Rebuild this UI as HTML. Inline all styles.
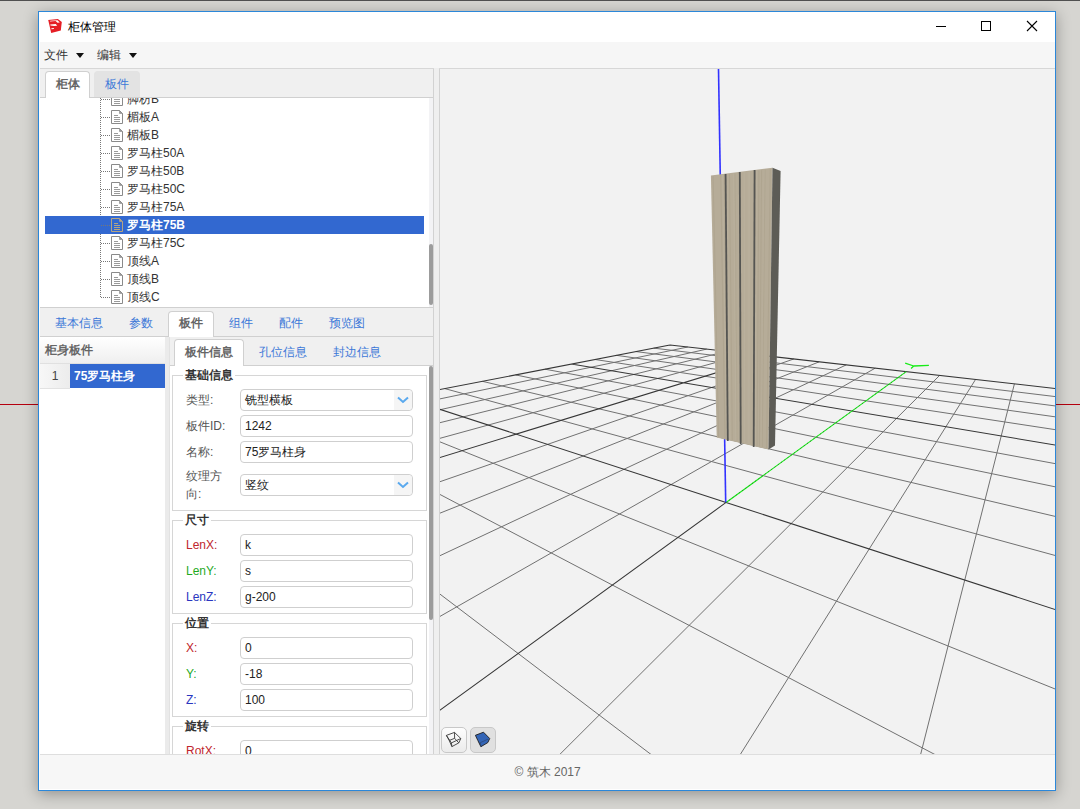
<!DOCTYPE html>
<html><head><meta charset="utf-8"><style>
*{box-sizing:border-box;margin:0;padding:0}
html,body{width:1080px;height:809px;overflow:hidden;background:#d6d5d1;font-family:"Liberation Sans",sans-serif;font-size:12px;color:#333}
.a{position:absolute}
#topline{position:absolute;left:0;top:0;width:1080px;height:1px;background:#505050}
#redl{position:absolute;left:0;top:404px;width:1080px;height:1px;background:#b5000f}
#win{position:absolute;left:38px;top:11px;width:1018px;height:780px;border:1px solid #2b87d9;background:#fff;box-shadow:0 3px 14px rgba(0,0,0,0.32)}
#title{position:absolute;left:68px;top:19px;font-size:12px;color:#000;line-height:16px}
#menubar{position:absolute;left:40px;top:42px;width:1015px;height:27px;background:#f6f6f6;border-bottom:1px solid #d7d7d7}
.menu{position:absolute;top:47px;line-height:16px;color:#333}
.caret{position:absolute;top:53px;width:0;height:0;border-left:4px solid transparent;border-right:4px solid transparent;border-top:5px solid #111}
#content{position:absolute;left:40px;top:69px;width:1015px;height:685px;background:#efefef}
#lp{position:absolute;left:40px;top:69px;width:394px;height:685px;background:#f0f0f0;border-right:1px solid #d2d2d2}
.tab{position:absolute;height:26px;border:1px solid #d0d0d0;border-bottom:none;border-radius:4px 4px 0 0;text-align:center;line-height:24px;color:#3c78d8}
.tab.act{background:#fff;color:#666;font-weight:bold}
.tab.in{background:#e3e3e3;border-color:#e3e3e3}
.hline{position:absolute;height:1px;background:#d0d0d0}
#tree{position:absolute;left:40px;top:98px;width:389px;height:209px;background:#fff;overflow:hidden}
#treewrap{position:absolute;left:40px;top:98px;width:393px;height:209px;overflow:hidden}
.vdot{position:absolute;left:100px;width:1px;background-image:linear-gradient(#777 50%,transparent 50%);background-size:1px 2px}
.hdot{position:absolute;left:101px;width:9px;height:1px;background-image:linear-gradient(90deg,#777 50%,transparent 50%);background-size:2px 1px}
.di{position:absolute}
.ti{position:absolute;left:127px;line-height:18px;height:18px;color:#333;white-space:nowrap}
.tsel{color:#fff;font-weight:bold}
.sel{position:absolute;left:45px;width:379px;height:18px;background:#3268d0}
.sb{position:absolute;width:4px;background:#f3f3f5}
.thumb{position:absolute;width:4px;background:#9c9c9c;border-radius:2px}
.ptab{position:absolute;top:311px;line-height:24px;color:#3c78d8;white-space:nowrap}
#list{position:absolute;left:40px;top:337px;width:125px;height:417px;background:#fff}
#lhead{position:absolute;left:40px;top:337px;width:125px;height:27px;background:linear-gradient(#fff,#efefef);border-bottom:1px solid #e0e0e0;font-weight:bold;color:#666;line-height:26px;padding-left:5px}
#lnum{position:absolute;left:40px;top:364px;width:30px;height:25px;background:linear-gradient(90deg,#f7f7f7,#ececec);color:#444;line-height:25px;text-align:center;border-bottom:1px solid #e2e2e2}
#lsel{position:absolute;left:70px;top:364px;width:95px;height:24px;background:#3268d0;color:#fff;font-weight:bold;line-height:24px;padding-left:4px}
#split{position:absolute;left:165px;top:337px;width:5px;height:417px;background:#ebebeb;border-right:1px solid #e2e2e2}
#rp{position:absolute;left:170px;top:337px;width:263px;height:417px;background:#f0f0f0;overflow:hidden}
#pcontent{position:absolute;left:170px;top:366px;width:259px;height:388px;background:#fff;overflow:hidden}
.fs{position:absolute;left:172px;width:255px;border:1px solid #d6d6d6}
.lg{position:absolute;left:183px;background:#fff;font-weight:bold;color:#333;line-height:12px;padding-left:2px}
.lbl{position:absolute;left:186px;line-height:22px;color:#555;white-space:nowrap}
.inp{position:absolute;left:240px;width:173px;height:22px;border:1px solid #cfcfcf;border-radius:4px;background:#fff;line-height:20px;padding-left:4px;color:#222;overflow:hidden}
.arr{position:absolute;right:0;top:0;width:18px;height:20px;background:#f5f5f5;border-radius:0 4px 4px 0}
.arr svg{position:absolute;left:3px;top:6px}
#view{position:absolute;left:439px;top:69px;width:616px;height:685px;background:#f2f2f2;border-left:1px solid #d2d2d2;overflow:hidden}
#status{position:absolute;left:40px;top:754px;width:1015px;height:35px;background:#f7f7f7;border-top:1px solid #dedede}
#copy{position:absolute;left:514.5px;top:764px;color:#666;line-height:16px;font-size:12px}
.vbtn{position:absolute;top:727px;width:26px;height:26px;border:1px solid #c8c8c8;border-radius:5px}
</style></head><body>
<div id="topline"></div>
<div id="redl"></div>
<div id="win"></div>
<svg class="a" style="left:47px;top:18px" width="16" height="16" viewBox="0 0 16 16"><path d="M1.2 2.1L10.9 1.1L14.8 3.9L13.8 12.6L4.2 15.1Z" fill="#e51e25"/><path d="M3 3.4L8.6 3.0L10.5 4.8L12.8 4.5L11.3 3.1L10.5 2.3L3.2 2.7Z" fill="#fff"/><path d="M3.2 6.5L8.8 6.1L10.2 7.8L7.2 8.0L3.5 7.4Z" fill="#fff"/><path d="M4.3 10.2L6.9 9.9L6.9 10.9L4.5 11.2Z" fill="#fff"/></svg>
<div id="title">柜体管理</div>
<svg class="a" style="left:930px;top:15px" width="120" height="22" viewBox="930 15 120 22"><path d="M936 26.5H946" stroke="#000" stroke-width="1"/><rect x="981.5" y="21.5" width="9" height="9" fill="none" stroke="#000"/><path d="M1027 21L1037 31M1037 21L1027 31" stroke="#000" stroke-width="1.1"/></svg>
<div id="menubar"></div>
<div class="menu" style="left:44px">文件</div><div class="caret" style="left:76px"></div>
<div class="menu" style="left:97px">编辑</div><div class="caret" style="left:129px"></div>
<div id="content"></div>
<div id="lp"></div>
<div class="hline" style="left:40px;top:97px;width:393px"></div>
<div class="tab act" style="left:45px;top:71px;width:45px;height:27px">柜体</div>
<div class="tab in" style="left:94px;top:71px;width:46px">板件</div>
<div id="tree"><div style="position:absolute;left:-40px;top:-98px;width:1080px;height:809px">
<div class="vdot" style="top:98px;height:200px"></div>
<div class="hdot" style="top:99px"></div>
<svg class="di" style="left:111px;top:92px" width="12" height="14" viewBox="0 0 12 14"><path d="M0.5 0.5H8.5L11.5 3.5V13.5H0.5Z" fill="#fff" stroke="#8a8a8a"/><path d="M8.5 0.5V3.5H11.5Z" fill="#9a9a9a" stroke="#8a8a8a" stroke-width="0.6"/><path d="M3 5.5H7M3 7.5H9M3 9.5H9M3 11.5H9" stroke="#9a9a9a"/></svg>
<div class="ti" style="top:90px">脚枋B</div>
<div class="hdot" style="top:117px"></div>
<svg class="di" style="left:111px;top:110px" width="12" height="14" viewBox="0 0 12 14"><path d="M0.5 0.5H8.5L11.5 3.5V13.5H0.5Z" fill="#fff" stroke="#8a8a8a"/><path d="M8.5 0.5V3.5H11.5Z" fill="#9a9a9a" stroke="#8a8a8a" stroke-width="0.6"/><path d="M3 5.5H7M3 7.5H9M3 9.5H9M3 11.5H9" stroke="#9a9a9a"/></svg>
<div class="ti" style="top:108px">楣板A</div>
<div class="hdot" style="top:135px"></div>
<svg class="di" style="left:111px;top:128px" width="12" height="14" viewBox="0 0 12 14"><path d="M0.5 0.5H8.5L11.5 3.5V13.5H0.5Z" fill="#fff" stroke="#8a8a8a"/><path d="M8.5 0.5V3.5H11.5Z" fill="#9a9a9a" stroke="#8a8a8a" stroke-width="0.6"/><path d="M3 5.5H7M3 7.5H9M3 9.5H9M3 11.5H9" stroke="#9a9a9a"/></svg>
<div class="ti" style="top:126px">楣板B</div>
<div class="hdot" style="top:153px"></div>
<svg class="di" style="left:111px;top:146px" width="12" height="14" viewBox="0 0 12 14"><path d="M0.5 0.5H8.5L11.5 3.5V13.5H0.5Z" fill="#fff" stroke="#8a8a8a"/><path d="M8.5 0.5V3.5H11.5Z" fill="#9a9a9a" stroke="#8a8a8a" stroke-width="0.6"/><path d="M3 5.5H7M3 7.5H9M3 9.5H9M3 11.5H9" stroke="#9a9a9a"/></svg>
<div class="ti" style="top:144px">罗马柱50A</div>
<div class="hdot" style="top:171px"></div>
<svg class="di" style="left:111px;top:164px" width="12" height="14" viewBox="0 0 12 14"><path d="M0.5 0.5H8.5L11.5 3.5V13.5H0.5Z" fill="#fff" stroke="#8a8a8a"/><path d="M8.5 0.5V3.5H11.5Z" fill="#9a9a9a" stroke="#8a8a8a" stroke-width="0.6"/><path d="M3 5.5H7M3 7.5H9M3 9.5H9M3 11.5H9" stroke="#9a9a9a"/></svg>
<div class="ti" style="top:162px">罗马柱50B</div>
<div class="hdot" style="top:189px"></div>
<svg class="di" style="left:111px;top:182px" width="12" height="14" viewBox="0 0 12 14"><path d="M0.5 0.5H8.5L11.5 3.5V13.5H0.5Z" fill="#fff" stroke="#8a8a8a"/><path d="M8.5 0.5V3.5H11.5Z" fill="#9a9a9a" stroke="#8a8a8a" stroke-width="0.6"/><path d="M3 5.5H7M3 7.5H9M3 9.5H9M3 11.5H9" stroke="#9a9a9a"/></svg>
<div class="ti" style="top:180px">罗马柱50C</div>
<div class="hdot" style="top:207px"></div>
<svg class="di" style="left:111px;top:200px" width="12" height="14" viewBox="0 0 12 14"><path d="M0.5 0.5H8.5L11.5 3.5V13.5H0.5Z" fill="#fff" stroke="#8a8a8a"/><path d="M8.5 0.5V3.5H11.5Z" fill="#9a9a9a" stroke="#8a8a8a" stroke-width="0.6"/><path d="M3 5.5H7M3 7.5H9M3 9.5H9M3 11.5H9" stroke="#9a9a9a"/></svg>
<div class="ti" style="top:198px">罗马柱75A</div>
<div class="sel" style="top:216px"></div>
<div class="hdot" style="top:225px"></div>
<svg class="di" style="left:111px;top:218px" width="12" height="14" viewBox="0 0 12 14"><path d="M0.5 0.5H8.5L11.5 3.5V13.5H0.5Z" fill="none" stroke="#b5a583"/><path d="M8.5 0.5V3.5H11.5Z" fill="#b5a583" stroke="#b5a583" stroke-width="0.6"/><path d="M3 5.5H7M3 7.5H9M3 9.5H9M3 11.5H9" stroke="#b5a583"/></svg>
<div class="ti tsel" style="top:216px">罗马柱75B</div>
<div class="hdot" style="top:243px"></div>
<svg class="di" style="left:111px;top:236px" width="12" height="14" viewBox="0 0 12 14"><path d="M0.5 0.5H8.5L11.5 3.5V13.5H0.5Z" fill="#fff" stroke="#8a8a8a"/><path d="M8.5 0.5V3.5H11.5Z" fill="#9a9a9a" stroke="#8a8a8a" stroke-width="0.6"/><path d="M3 5.5H7M3 7.5H9M3 9.5H9M3 11.5H9" stroke="#9a9a9a"/></svg>
<div class="ti" style="top:234px">罗马柱75C</div>
<div class="hdot" style="top:261px"></div>
<svg class="di" style="left:111px;top:254px" width="12" height="14" viewBox="0 0 12 14"><path d="M0.5 0.5H8.5L11.5 3.5V13.5H0.5Z" fill="#fff" stroke="#8a8a8a"/><path d="M8.5 0.5V3.5H11.5Z" fill="#9a9a9a" stroke="#8a8a8a" stroke-width="0.6"/><path d="M3 5.5H7M3 7.5H9M3 9.5H9M3 11.5H9" stroke="#9a9a9a"/></svg>
<div class="ti" style="top:252px">顶线A</div>
<div class="hdot" style="top:279px"></div>
<svg class="di" style="left:111px;top:272px" width="12" height="14" viewBox="0 0 12 14"><path d="M0.5 0.5H8.5L11.5 3.5V13.5H0.5Z" fill="#fff" stroke="#8a8a8a"/><path d="M8.5 0.5V3.5H11.5Z" fill="#9a9a9a" stroke="#8a8a8a" stroke-width="0.6"/><path d="M3 5.5H7M3 7.5H9M3 9.5H9M3 11.5H9" stroke="#9a9a9a"/></svg>
<div class="ti" style="top:270px">顶线B</div>
<div class="hdot" style="top:297px"></div>
<svg class="di" style="left:111px;top:290px" width="12" height="14" viewBox="0 0 12 14"><path d="M0.5 0.5H8.5L11.5 3.5V13.5H0.5Z" fill="#fff" stroke="#8a8a8a"/><path d="M8.5 0.5V3.5H11.5Z" fill="#9a9a9a" stroke="#8a8a8a" stroke-width="0.6"/><path d="M3 5.5H7M3 7.5H9M3 9.5H9M3 11.5H9" stroke="#9a9a9a"/></svg>
<div class="ti" style="top:288px">顶线C</div>
</div></div>
<div class="sb" style="left:429px;top:98px;height:209px"></div>
<div class="thumb" style="left:429px;top:244px;height:61px"></div>
<div class="hline" style="left:40px;top:307px;width:393px"></div>
<div class="hline" style="left:40px;top:336px;width:393px"></div>
<div class="tab act" style="left:168px;top:311px;width:46px;height:26px;font-weight:bold;line-height:22px">板件</div>
<div class="ptab" style="left:55px">基本信息</div>
<div class="ptab" style="left:129px">参数</div>
<div class="ptab" style="left:229px">组件</div>
<div class="ptab" style="left:279px">配件</div>
<div class="ptab" style="left:329px">预览图</div>
<div id="list"></div>
<div id="lhead">柜身板件</div>
<div id="lnum">1</div>
<div id="lsel">75罗马柱身</div>
<div id="split"></div>
<div id="rp">
 <div class="hline" style="left:0;top:28px;width:263px"></div>
 <div class="tab act" style="left:4px;top:2px;width:70px;height:27px;font-weight:bold">板件信息</div>
 <div class="ptab" style="left:89px;top:2px;line-height:26px">孔位信息</div>
 <div class="ptab" style="left:163px;top:2px;line-height:26px">封边信息</div>
</div>
<div id="pcontent">
<div style="position:absolute;left:-170px;top:-366px;width:1080px;height:809px">
<div class="fs" style="top:375px;height:136px"></div><div class="lg" style="top:369px;width:52px">基础信息</div>
<div class="lbl" style="top:389px;">类型:</div><div class="inp" style="top:389px">铣型横板<span class="arr"><svg width="12" height="8" viewBox="0 0 12 8"><path d="M1 1.5L6 6L11 1.5" fill="none" stroke="#5aa9ee" stroke-width="2"/></svg></span></div>
<div class="lbl" style="top:415px;">板件ID:</div><div class="inp" style="top:415px">1242</div>
<div class="lbl" style="top:441px;">名称:</div><div class="inp" style="top:441px">75罗马柱身</div>
<div class="lbl" style="top:467px;line-height:18px">纹理方<br>向:</div><div class="inp" style="top:474px">竖纹<span class="arr"><svg width="12" height="8" viewBox="0 0 12 8"><path d="M1 1.5L6 6L11 1.5" fill="none" stroke="#5aa9ee" stroke-width="2"/></svg></span></div>
<div class="fs" style="top:520px;height:94px"></div><div class="lg" style="top:514px;width:28px">尺寸</div>
<div class="lbl" style="top:534px;color:#c0262d">LenX:</div><div class="inp" style="top:534px">k</div>
<div class="lbl" style="top:560px;color:#1faa1f">LenY:</div><div class="inp" style="top:560px">s</div>
<div class="lbl" style="top:586px;color:#2a36c0">LenZ:</div><div class="inp" style="top:586px">g-200</div>
<div class="fs" style="top:623px;height:94px"></div><div class="lg" style="top:617px;width:28px">位置</div>
<div class="lbl" style="top:637px;color:#c0262d">X:</div><div class="inp" style="top:637px">0</div>
<div class="lbl" style="top:663px;color:#1faa1f">Y:</div><div class="inp" style="top:663px">-18</div>
<div class="lbl" style="top:689px;color:#2a36c0">Z:</div><div class="inp" style="top:689px">100</div>
<div class="fs" style="top:726px;height:75px"></div><div class="lg" style="top:720px;width:28px">旋转</div>
<div class="lbl" style="top:740px;color:#c0262d">RotX:</div><div class="inp" style="top:740px">0</div>
</div>
</div>
<div class="sb" style="left:429px;top:366px;height:388px"></div>
<div class="thumb" style="left:429px;top:366px;height:254px"></div>
<div class="a" style="left:434px;top:68px;width:5px;height:1px;background:#eeeeee"></div>
<div id="view">
<svg style="position:absolute;left:0;top:0" width="615" height="685" viewBox="440 69 615 685">
<path d="M-1485.68 802.12L687.79 346.98 M-775.47 625.34L-10216.47 4859.66 M-1846.83 929.97L706.63 349.10 M-467.21 565.54L-7498.61 4864.17 M-2436.96 1138.89L726.55 351.35 M-248.34 523.09L-4780.75 4868.67 M-3575.00 1541.77L747.66 353.74 M-84.89 491.38L-2062.89 4873.18 M-12171.85 4856.42L793.86 358.95 M142.93 447.19L3372.84 4882.18 M-10450.52 4859.28L819.22 361.81 M225.48 431.18L6090.70 4886.69 M-8729.19 4862.13L846.28 364.87 M294.15 417.86L8808.56 4891.19 M-7007.85 4864.98L875.22 368.13 M352.18 406.60L11526.42 4895.69 M-3565.19 4870.69L939.61 375.40 M444.86 388.62L2887.81 1056.56 M-1843.85 4873.54L975.56 379.46 M482.45 381.33L2316.67 813.95 M-122.52 4876.39L1014.41 383.85 M515.60 374.90L2015.52 686.02 M1598.81 4879.24L1056.54 388.60 M545.04 369.19L1829.52 607.00 M5041.48 4884.95L1152.42 399.43 M595.05 359.49L1611.85 514.53 M6762.81 4887.80L1207.30 405.62 M616.46 355.34L1542.68 485.15 M8484.15 4890.65L1267.75 412.44 M635.92 351.56L1488.50 462.13 M10205.48 4893.50L1334.64 419.99 M653.68 348.12L1444.91 443.62" stroke="#717171" stroke-width="1" fill="none"/>
<path d="M-1241.90 715.81L669.95 344.96 M-1241.90 715.81L-12934.33 4855.16 M-6684.98 2642.77L770.05 356.26 M41.82 466.80L654.97 4877.68 M3320.15 4882.10L1102.37 393.78 M571.37 364.09L1703.21 553.35 M11926.81 4896.36L1409.08 428.40 M669.95 344.96L1409.08 428.40" stroke="#363636" stroke-width="1.05" fill="none"/>
<path d="M401.85 396.97L726.09 502.45 M-5286.52 4867.83L726.09 502.45" stroke="#363636" stroke-width="1.05" fill="none"/>
<path d="M726.09 502.45L4386.93 1693.40" stroke="#363636" stroke-width="1.05" fill="none"/>
<path d="M726.09 502.45L906.25 371.64" stroke="#16ec16" stroke-width="1.15" fill="none"/>
<path d="M726.09 502.45L906.25 371.64" stroke="#2a2a2a" stroke-width="1" stroke-dasharray="1 3" opacity="0.6" fill="none"/>
<path d="M905.2 363.1L913.7 366M913.7 366L928.9 365.4M913.7 366L911.1 368.5" stroke="#16ec16" stroke-width="1.3" fill="none"/>
<path d="M725.7 502.3L718.5 69" stroke="#3232ff" stroke-width="1.6" fill="none"/>
<defs>
<linearGradient id="wood" x1="0" x2="1" y1="0" y2="0">
<stop offset="0" stop-color="#b9af9b"/><stop offset="0.5" stop-color="#b3a993"/><stop offset="1" stop-color="#b7ad99"/>
</linearGradient>
</defs>
<path d="M710.9 175.5L772.5 167.8L768.5 449.5L716.7 437.5Z" fill="#b6ac98"/>
<path d="M772.5 167.8L780.6 170.9L775 445.4L768.5 449.5Z" fill="#5d5c56"/>
<path d="M725.6 174.7L729.0 439.4 M733.7 173.7L735.9 440.9 M749.4 171.7L749.1 444.0 M748.2 171.8L748.1 443.8 M726.9 174.5L730.1 439.6 M722.7 175.0L726.6 438.8 M744.2 172.3L744.7 443.0 M735.4 173.4L737.3 441.3 M725.2 174.7L728.7 439.3 M764.4 169.8L761.7 446.9 M756.6 170.8L755.1 445.4" stroke="#c2b9a6" stroke-width="0.7" opacity="0.55"/>
<path d="M720.7 175.3L725.0 438.4 M729.5 174.2L732.3 440.1 M761.6 170.2L759.4 446.4 M740.0 172.9L741.2 442.2 M754.9 171.0L753.7 445.1 M735.2 173.5L737.2 441.2 M770.3 169.1L766.6 448.1 M765.0 169.7L762.2 447.0 M713.1 176.2L718.6 436.9 M724.3 174.8L727.9 439.1 M758.9 170.5L757.1 445.8" stroke="#a1977f" stroke-width="0.7" opacity="0.45"/>
<path d="M725.6 174L727.8 441" stroke="#555552" stroke-width="1.8"/>
<path d="M739.8 172L740.7 444" stroke="#555552" stroke-width="1.8"/>
<path d="M754.6 170L753.7 447" stroke="#555552" stroke-width="1.8"/>
</svg>
</div>
<div class="vbtn" style="left:441px;background:linear-gradient(#fdfdfd,#ebebeb)"><svg width="24" height="24" viewBox="-2 -2 24 24" style="position:absolute;left:0;top:0"><path d="M2.4 5.4L10.5 2.4L16.8 8.5L7.4 12.9Z M5.2 10.5L10.6 8.3L14.8 12.9L7.9 16.6Z M2.4 5.4L5.2 10.5M10.5 2.4L10.6 8.3M16.8 8.5L14.8 12.9M7.4 12.9L7.9 16.6" fill="none" stroke="#3a3a3a" stroke-width="0.9" stroke-linejoin="round"/></svg></div>
<div class="vbtn" style="left:470px;background:#e0e0e0"><svg width="24" height="24" viewBox="-2 -2 24 24" style="position:absolute;left:0;top:0"><path d="M2.4 5.3L10.5 2.2L16.7 8.5L14.8 12.6L7.9 16.7L4.9 10.6Z" fill="#3465b6" stroke="#1c1c1c" stroke-width="0.9" stroke-linejoin="round"/><path d="M7.4 12.6L15.1 9.1M7.4 12.6L7.9 16.7" fill="none" stroke="#2a3f66" stroke-width="0.6"/></svg></div>
<div id="status"></div>
<div id="copy">© 筑木 2017</div>
</body></html>
